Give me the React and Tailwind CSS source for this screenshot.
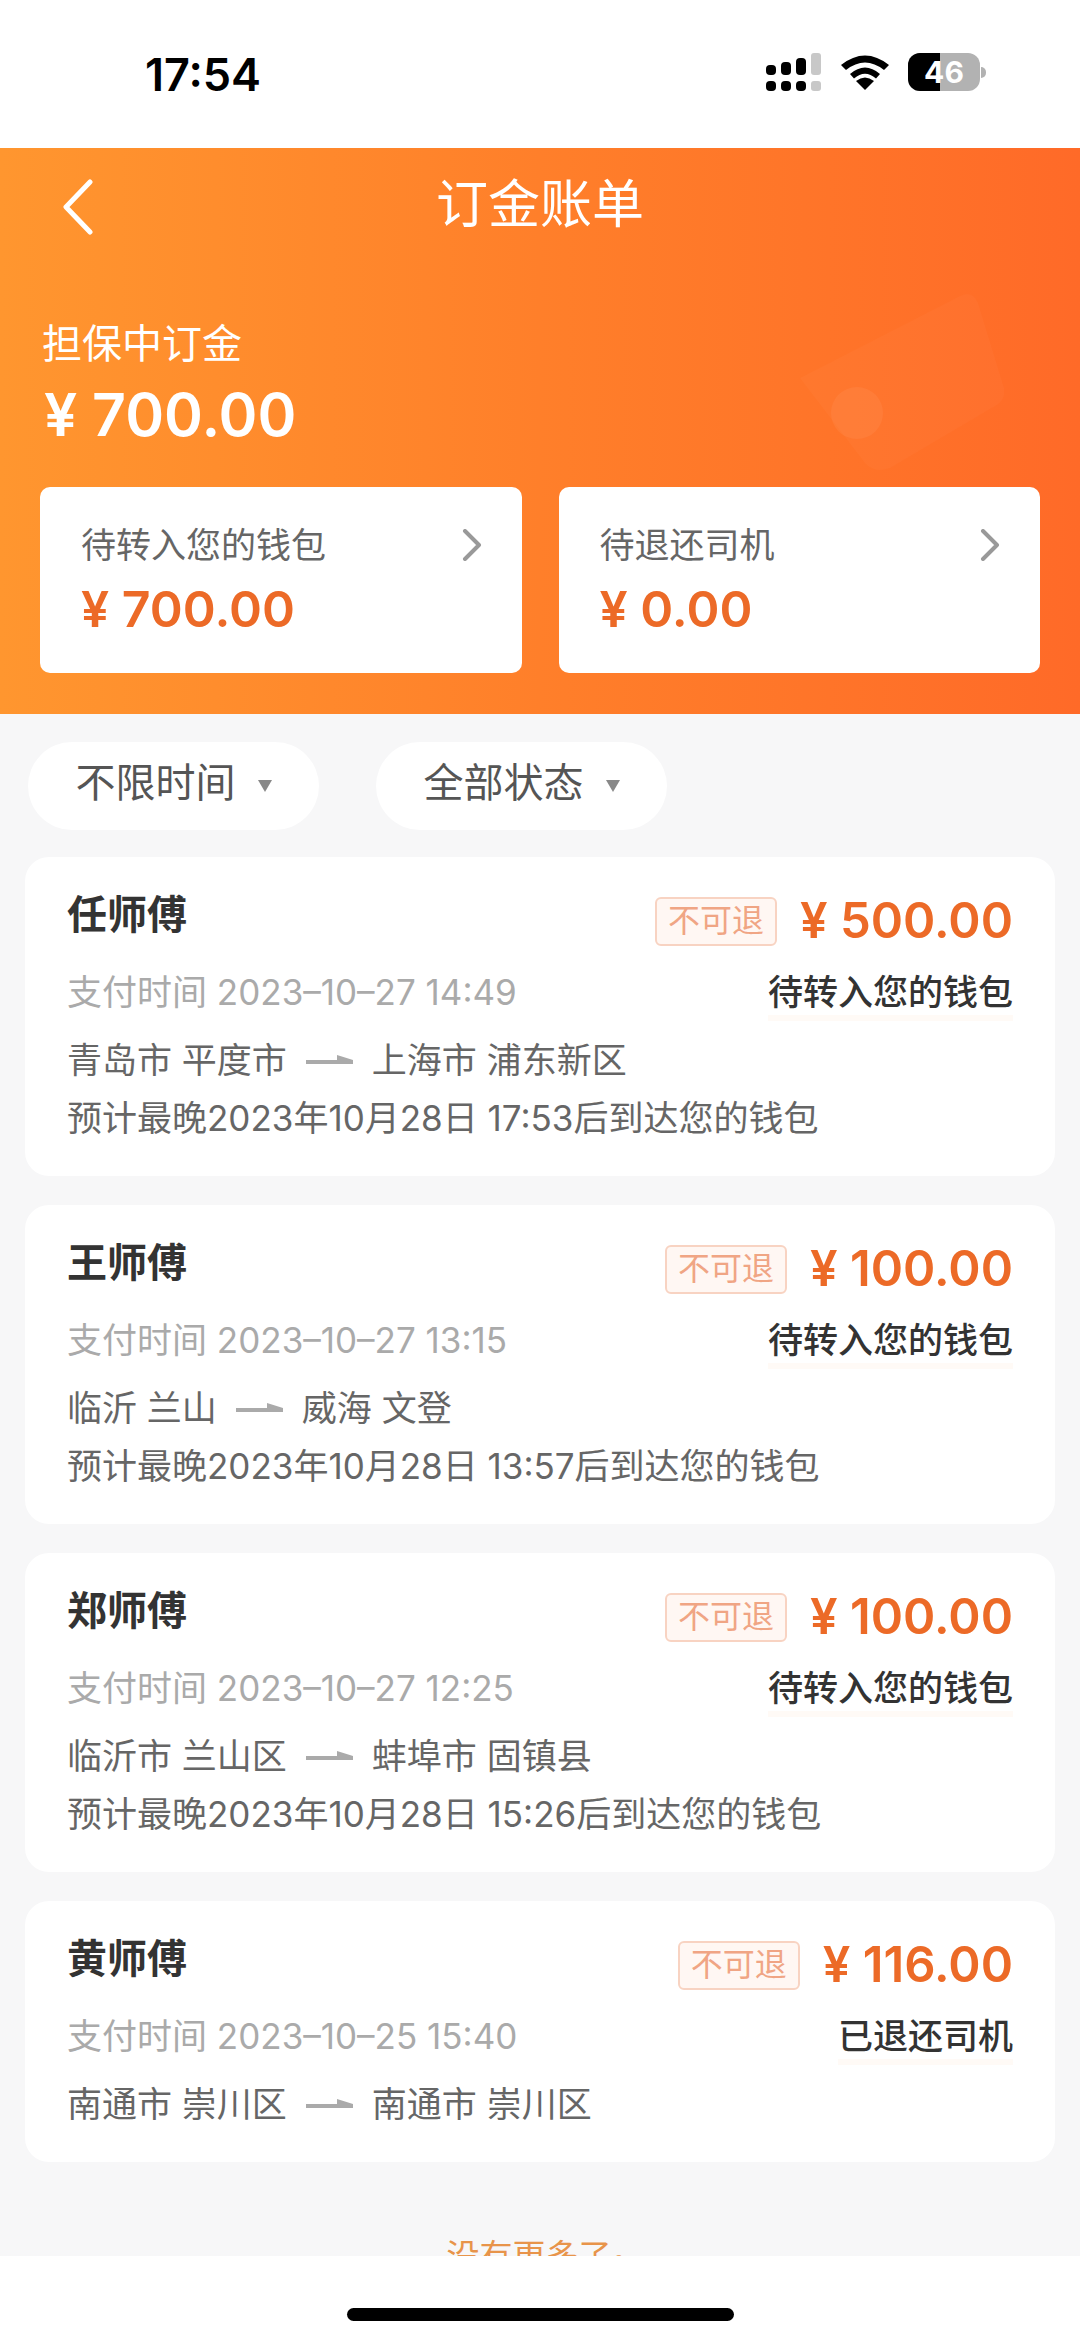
import React from 'react';

const font = { fontFamily: 'Inter, "Noto Sans CJK SC", sans-serif' };

const orders = [
  { name: '任师傅', price: '500.00', time: '2023–10–27 14:49', status: '待转入您的钱包', from: '青岛市 平度市', to: '上海市 浦东新区', note: '预计最晚2023年10月28日 17:53后到达您的钱包' },
  { name: '王师傅', price: '100.00', time: '2023–10–27 13:15', status: '待转入您的钱包', from: '临沂 兰山', to: '威海 文登', note: '预计最晚2023年10月28日 13:57后到达您的钱包' },
  { name: '郑师傅', price: '100.00', time: '2023–10–27 12:25', status: '待转入您的钱包', from: '临沂市 兰山区', to: '蚌埠市 固镇县', note: '预计最晚2023年10月28日 15:26后到达您的钱包' },
  { name: '黄师傅', price: '116.00', time: '2023–10–25 15:40', status: '已退还司机', from: '南通市 崇川区', to: '南通市 崇川区' },
];

const StatusBar = () => (
  <div className="h-[148px] bg-white flex items-start justify-between pt-[48px] pl-[145px] pr-[94px]">
    <span className="text-[45px] leading-[54px] font-semibold text-black">17:54</span>
    <div className="flex items-center gap-[18px] pt-[5px]">
      <svg width="56" height="38" viewBox="0 0 56 38">
        <rect x="0" y="12" width="10" height="10" rx="4" fill="#000" />
        <rect x="15" y="9" width="10" height="13" rx="4" fill="#000" />
        <rect x="30" y="5" width="10" height="17" rx="4" fill="#000" />
        <rect x="45" y="0" width="10" height="22" rx="3" fill="#c8c8c8" />
        <rect x="0" y="28" width="10" height="10" rx="4" fill="#000" />
        <rect x="15" y="28" width="10" height="10" rx="4" fill="#000" />
        <rect x="30" y="28" width="10" height="10" rx="4" fill="#000" />
        <rect x="45" y="28" width="10" height="10" rx="3" fill="#c8c8c8" />
      </svg>
      <svg width="50" height="36" viewBox="0 0 50 36">
        <path d="M25 36 L16 27 Q25 20 34 27 Z" fill="#000" />
        <path d="M10 20 Q25 7 40 20 L36 24.500 Q25 15 14 24.500 Z" fill="#000" />
        <path d="M1 11 Q25 -8 49 11 L44 16 Q25 1 6 16 Z" fill="#000" />
      </svg>
      <div className="flex items-center gap-[1px]">
        <div className="relative w-[72px] h-[38px] rounded-[12px] overflow-hidden bg-[#b2b2b2] flex items-center justify-center">
          <div className="absolute left-0 top-0 bottom-0 w-[32px] bg-black" />
          <span className="relative text-[30px] leading-none font-bold text-white">46</span>
        </div>
        <div className="w-[5px] h-[11px] rounded-r-full bg-[#b2b2b2]" />
      </div>
    </div>
  </div>
);

const SummaryCard = ({ label, amount }) => (
  <div className="flex-1 h-[186px] bg-white rounded-[10px] pl-[41px] pr-[40px] pt-[32px]">
    <div className="flex items-center justify-between h-[52px]">
      <span className="text-[35px] leading-[52px] text-[#666]">{label}</span>
      <svg width="20" height="32" viewBox="0 0 20 32" fill="none" stroke="#999" strokeWidth="4" strokeLinecap="round" strokeLinejoin="round">
        <path d="M3 2 L17 16 L3 30" />
      </svg>
    </div>
    <div className="mt-[6px] text-[50px] leading-[64px] font-semibold text-[#ec6a27]">¥ {amount}</div>
  </div>
);

const Filter = ({ label }) => (
  <div className="w-[291px] h-[88px] bg-white rounded-[44px] flex items-center justify-center gap-[22px]">
    <span className="text-[40px] leading-none text-[#555] -mt-[6px]">{label}</span>
    <svg width="14" height="12" viewBox="0 0 14 12"><path d="M0 0 H14 L7 12 Z" fill="#888" /></svg>
  </div>
);

const OrderCard = ({ order }) => (
  <div className="bg-white rounded-[24px] px-[42px] pt-[32px] pb-[33px]">
    <div className="flex items-center justify-between h-[64px]">
      <span className="text-[40px] leading-[54px] font-semibold text-[#333] -mt-[12px]">{order.name}</span>
      <div className="flex items-center gap-[23px]">
        <span className="w-[122px] h-[49px] rounded-[6px] border-2 border-[#f8d3c2] bg-[#fff7f3] flex items-center justify-center text-[32px] leading-none text-[#f0a584]">不可退</span>
        <span className="text-[49px] leading-[64px] font-semibold text-[#ec6a27]">¥ {order.price}</span>
      </div>
    </div>
    <div className="flex items-center justify-between h-[50px] mt-[14px]">
      <span className="text-[35px] leading-[50px] text-[#aaa]">支付时间 {order.time}</span>
      <span className="relative text-[35px] leading-[50px] font-medium text-[#333]">
        {order.status}
        <span className="absolute left-0 right-0 -bottom-[4px] h-[6px] bg-[#fffaf6]" />
      </span>
    </div>
    <div className="flex items-center h-[50px] mt-[18px] text-[35px] leading-[50px] text-[#666]">
      <span>{order.from}</span>
      <svg className="mx-[19px]" width="47" height="10" viewBox="0 0 47 10"><path d="M0 5 H31 V0 L47 5 V9 H0 Z" fill="#aaa" /></svg>
      <span>{order.to}</span>
    </div>
    {order.note && (
      <div className="mt-[8px] text-[35px] leading-[50px] text-[#666]">{order.note}</div>
    )}
  </div>
);

const App = () => (
  <div className="w-[1080px] h-[2341px] overflow-hidden bg-[#f7f7f8] flex flex-col" style={font}>
    <StatusBar />

    {/* Header */}
    <div className="relative h-[566px] bg-gradient-to-r from-[#ff962f] via-[#ff7f2a] to-[#ff6a28] px-[40px]">
      <svg className="absolute left-[780px] top-[130px]" width="240" height="200" viewBox="0 0 240 200" fill="#fff">
        <path d="M20 100 L180 18 Q192 12 198 25 L224 110 Q226 122 215 128 L110 190 Q95 196 85 185 Z" fillOpacity="0.025" />
        <circle cx="77" cy="135" r="26" fillOpacity="0.05" />
      </svg>
      <div className="relative h-[118px] flex items-center justify-center">
        <svg className="absolute left-[21px] top-[31px]" width="32" height="56" viewBox="0 0 32 56" fill="none" stroke="#fff" strokeWidth="5" strokeLinecap="round" strokeLinejoin="round">
          <path d="M29 3 L5 28 L29 53" />
        </svg>
        <span className="text-[52px] leading-none text-white -mt-[4px]">订金账单</span>
      </div>
      <div className="relative text-[40px] leading-[56px] text-white mt-[50px] ml-[2px]">担保中订金</div>
      <div className="relative text-[59px] leading-[72px] font-semibold text-white mt-[7px] ml-[4px]">¥ 700.00</div>
      <div className="relative flex gap-[37px] mt-[36px]">
        <SummaryCard label="待转入您的钱包" amount="700.00" />
        <SummaryCard label="待退还司机" amount="0.00" />
      </div>
    </div>

    {/* Filters */}
    <div className="flex gap-[57px] pl-[28px] pt-[28px]">
      <Filter label="不限时间" />
      <Filter label="全部状态" />
    </div>

    {/* Order list */}
    <div className="flex flex-col gap-[29px] px-[25px] mt-[27px]">
      {orders.map((order) => (
        <OrderCard key={order.name} order={order} />
      ))}
    </div>

    <div className="relative flex-1 overflow-hidden">
      <div className="text-center text-[33px] leading-none text-[#e8944a] pt-[78px]">没有更多了~</div>
      <div className="absolute left-0 right-0 bottom-0 h-[85px] bg-white flex justify-center">
        <div className="mt-[52px] w-[387px] h-[13px] rounded-full bg-black" />
      </div>
    </div>
  </div>
);

export default App;
